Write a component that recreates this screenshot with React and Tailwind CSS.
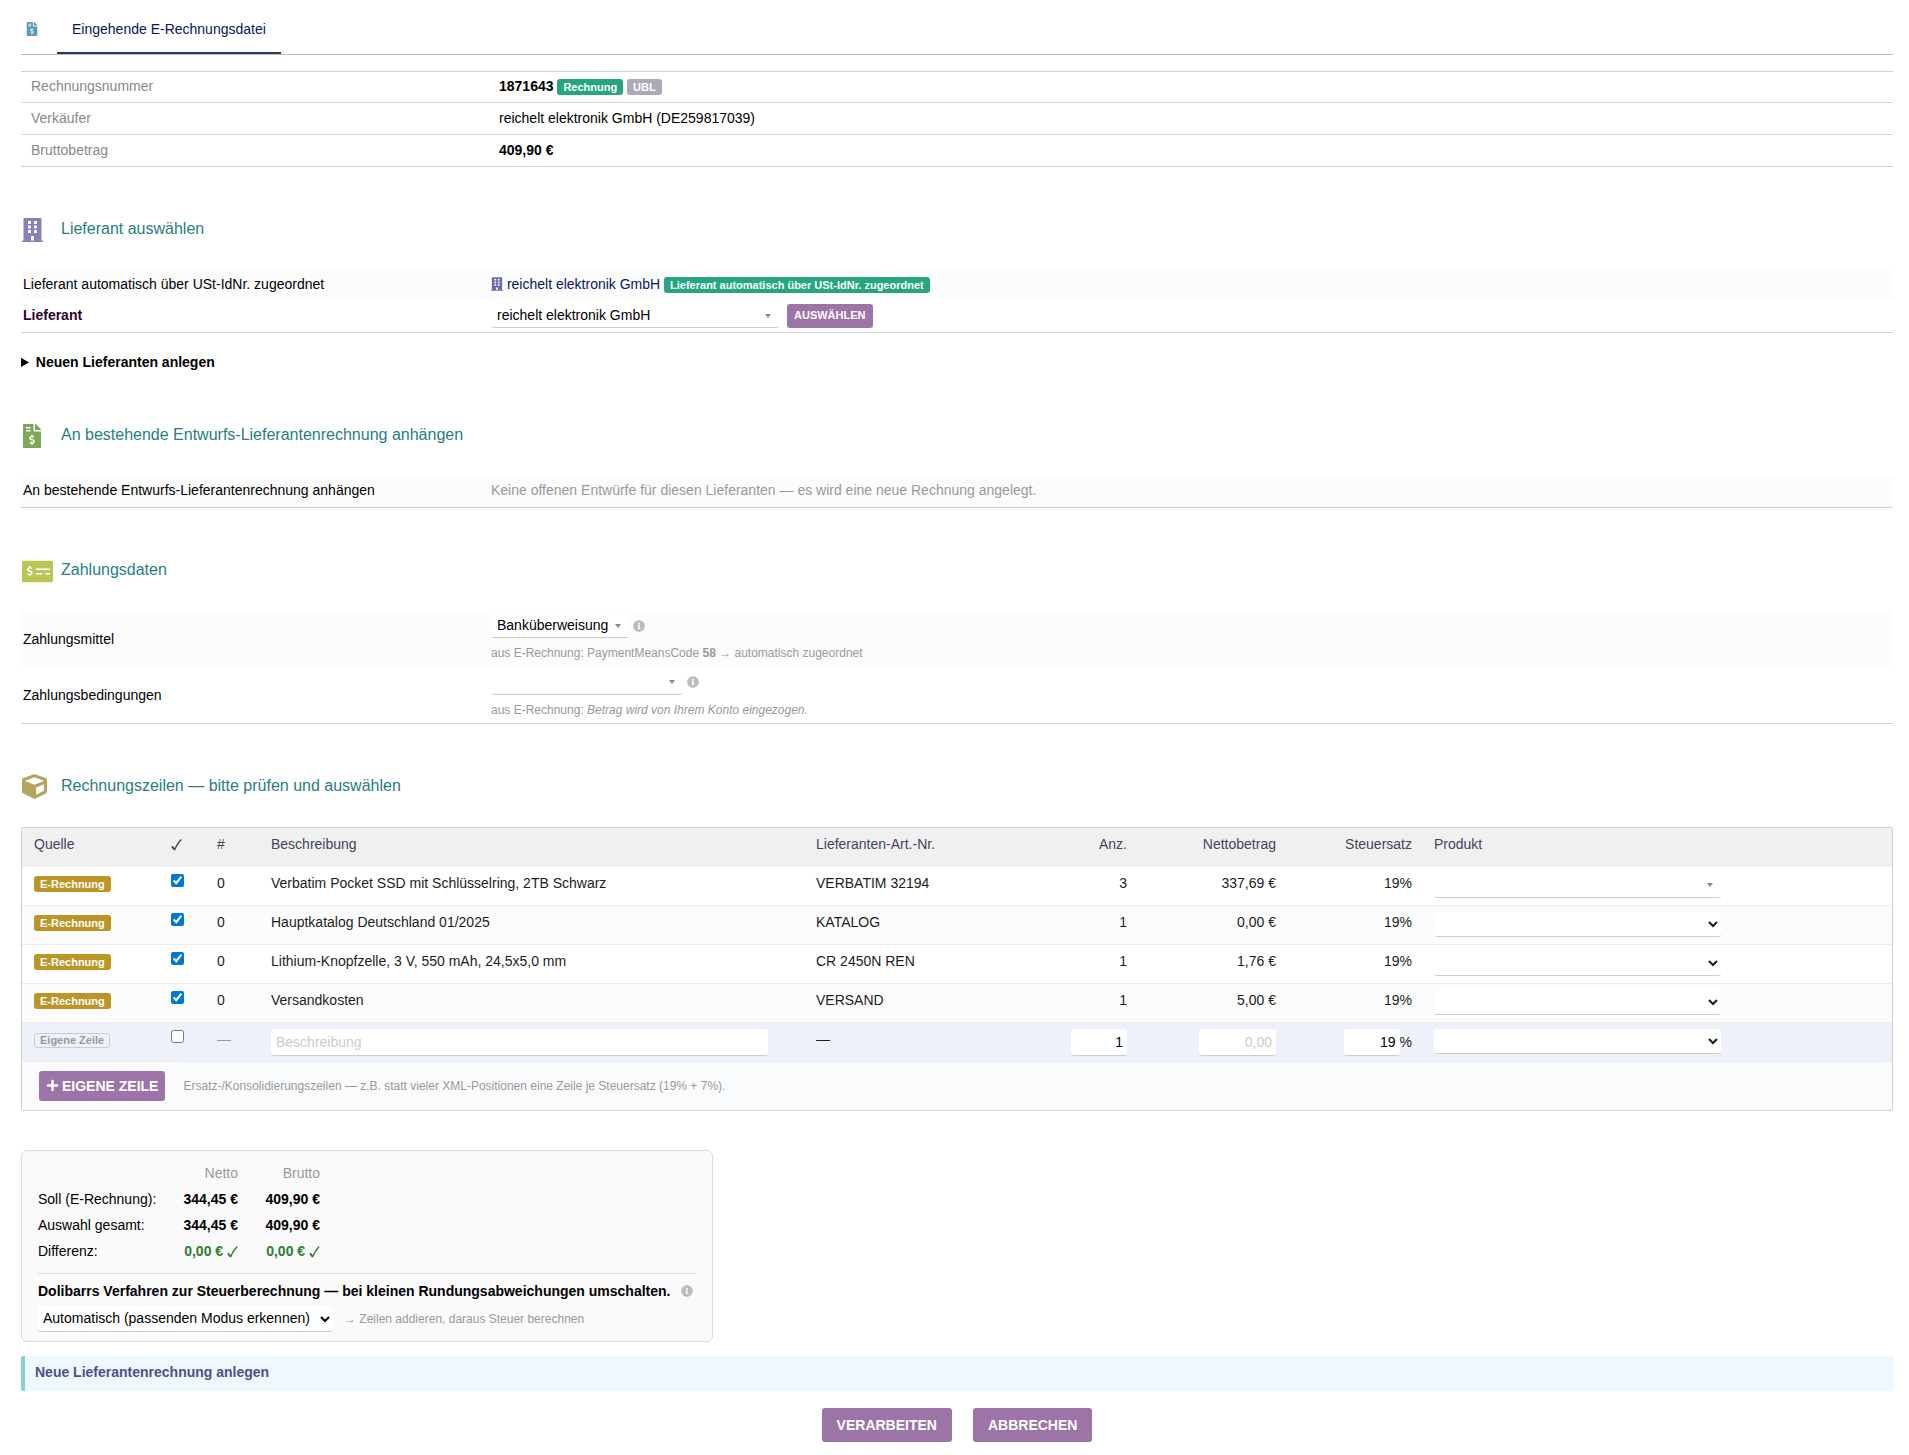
import React, { useState } from 'react';
import {
  FaBuilding,
  FaCube,
  FaFileInvoiceDollar,
  FaInfoCircle,
  FaMoneyCheckAlt,
  FaPlus,
} from 'react-icons/fa';

const initialLines = [
  { id: 1, pos: '0', text: 'Verbatim Pocket SSD mit Schlüsselring, 2TB Schwarz', ref: 'VERBATIM 32194', qty: '3', net: '337,69 €', vat: '19%' },
  { id: 2, pos: '0', text: 'Hauptkatalog Deutschland 01/2025', ref: 'KATALOG', qty: '1', net: '0,00 €', vat: '19%' },
  { id: 3, pos: '0', text: 'Lithium-Knopfzelle, 3 V, 550 mAh, 24,5x5,0 mm', ref: 'CR 2450N REN', qty: '1', net: '1,76 €', vat: '19%' },
  { id: 4, pos: '0', text: 'Versandkosten', ref: 'VERSAND', qty: '1', net: '5,00 €', vat: '19%' },
];

const totals = [
  { label: 'Soll (E-Rechnung):', net: '344,45 €', gross: '409,90 €' },
  { label: 'Auswahl gesamt:', net: '344,45 €', gross: '409,90 €' },
  { label: 'Differenz:', net: '0,00 €', gross: '0,00 €', ok: true },
];

const Badge = ({ color, children }) => (
  <span className={`inline-block rounded-[3px] px-1.5 text-[11px] leading-4 font-bold whitespace-nowrap ${color}`}>
    {children}
  </span>
);

const CheckMark = () => (
  <svg className="inline h-3 w-[11px]" viewBox="0 0 11 12" fill="none" stroke="currentColor" role="img" aria-label="OK">
    <path d="M1 7.4L3.6 10.6" strokeWidth="2" />
    <path d="M3.4 11.2C5 7.4 7.2 3.6 10.2 0.6" strokeWidth="1.4" />
  </svg>
);

const SectionTitle = ({ icon, children }) => (
  <h2 className="mt-[51px] mb-7 flex h-6 items-center text-base text-[#25807f]">
    <span className="w-10 shrink-0 pl-px">{icon}</span>
    <span className="pb-0.5">{children}</span>
  </h2>
);

// Select with the small grey triangle instead of the browser arrow
const ComboSelect = ({ label, options, className }) => (
  <span className="inline-grid items-center">
    <select
      aria-label={label}
      className={`col-start-1 row-start-1 h-[25px] appearance-none rounded-[3px] border-b border-[#ccc] bg-white pl-1.5 ${className}`}
    >
      {options.map((o) => (
        <option key={o}>{o}</option>
      ))}
    </select>
    <svg className="pointer-events-none col-start-1 row-start-1 mr-2 h-1 w-[6px] justify-self-end" viewBox="0 0 6 4">
      <path d="M0 0h6L3 4z" fill="#888" />
    </svg>
  </span>
);

const Info = ({ text }) => (
  <button type="button" title={text} aria-label={text} className="text-xs text-[#bbb]">
    <FaInfoCircle />
  </button>
);

const App = () => {
  const [checked, setChecked] = useState([1, 2, 3, 4]);

  const toggle = (id) => {
    setChecked(checked.includes(id) ? checked.filter((c) => c !== id) : [...checked, id]);
  };

  return (
    <div className="bg-white pr-4 pb-3 pl-[21px] font-['Liberation_Sans',Arial,sans-serif] text-sm text-black">
      {/* Tabs */}
      <nav className="flex h-[55px] border-b border-[#bbb]">
        <span className="flex w-9 items-center pt-1 pl-1 text-sm text-[#5b9bb0]">
          <FaFileInvoiceDollar />
        </span>
        <a href="#datei" className="flex items-center border-b-2 border-[#263c5c] px-[15px] pt-1.5 text-[#0a1464]">
          Eingehende E-Rechnungsdatei
        </a>
      </nav>

      {/* Invoice header */}
      <table className="mt-4 w-full table-fixed border-t border-[#d0d0d0]">
        <tbody>
          <tr className="h-[31px] border-b border-[#d8d8d8]">
            <th scope="row" className="w-1/4 px-[10px] pb-0.5 text-left font-normal text-[#888]">Rechnungsnummer</th>
            <td className="px-[10px] pb-0.5">
              <b>1871643</b> <Badge color="bg-[#25a580] text-white">Rechnung</Badge>{' '}
              <Badge color="bg-[#aaaabb] text-white">UBL</Badge>
            </td>
          </tr>
          <tr className="h-8 border-b border-[#d8d8d8]">
            <th scope="row" className="px-[10px] pb-0.5 text-left font-normal text-[#888]">Verkäufer</th>
            <td className="px-[10px] pb-0.5">reichelt elektronik GmbH (DE259817039)</td>
          </tr>
          <tr className="h-8 border-b border-[#d0d0d0]">
            <th scope="row" className="px-[10px] pb-0.5 text-left font-normal text-[#888]">Bruttobetrag</th>
            <td className="px-[10px] pb-0.5 font-bold">409,90 €</td>
          </tr>
        </tbody>
      </table>

      {/* Supplier */}
      <SectionTitle icon={<FaBuilding className="h-6 w-[21px] text-[#8681b8]" />}>Lieferant auswählen</SectionTitle>
      <table className="w-full table-fixed">
        <tbody>
          <tr className="h-[30px] bg-[#fcfcfc]">
            <th scope="row" className="w-1/4 px-0.5 pb-0.5 text-left font-normal">
              Lieferant automatisch über USt-IdNr. zugeordnet
            </th>
            <td className="px-0.5 pb-0.5">
              <a href="#lieferant" className="text-[#0a1464]">
                <FaBuilding className="mb-0.5 inline h-[14px] w-3 text-[#6c6aa8]" /> reichelt elektronik GmbH
              </a>{' '}
              <Badge color="bg-[#25a580] text-white">Lieferant automatisch über USt-IdNr. zugeordnet</Badge>
            </td>
          </tr>
          <tr className="h-8 border-b border-[#d0d0d0]">
            <th scope="row" className="px-0.5 pb-0.5 text-left font-bold text-[#300030]">Lieferant</th>
            <td className="px-0.5">
              <div className="flex items-center gap-2">
                <ComboSelect label="Lieferant" options={['reichelt elektronik GmbH']} className="w-72" />
                <button type="button" className="h-6 rounded-[3px] bg-[#9c74a8] px-[7px] text-[11px] font-bold text-white">
                  AUSWÄHLEN
                </button>
              </div>
            </td>
          </tr>
        </tbody>
      </table>

      <details className="mt-[18px] leading-[22px]">
        <summary className="cursor-pointer font-bold">Neuen Lieferanten anlegen</summary>
      </details>

      {/* Draft invoice */}
      <SectionTitle icon={<FaFileInvoiceDollar className="-ml-0.5 size-6 text-[#7fa65a]" />}>
        An bestehende Entwurfs-Lieferantenrechnung anhängen
      </SectionTitle>
      <table className="w-full table-fixed">
        <tbody>
          <tr className="h-8 border-b border-[#d0d0d0] bg-[#fcfcfc]">
            <th scope="row" className="w-1/4 px-0.5 pb-0.5 text-left font-normal">
              An bestehende Entwurfs-Lieferantenrechnung anhängen
            </th>
            <td className="px-0.5 pb-0.5 text-[#999]">
              Keine offenen Entwürfe für diesen Lieferanten — es wird eine neue Rechnung angelegt.
            </td>
          </tr>
        </tbody>
      </table>

      {/* Payment */}
      <SectionTitle icon={<FaMoneyCheckAlt className="h-[25px] w-[31px] text-[#bbc755]" />}>Zahlungsdaten</SectionTitle>
      <table className="w-full table-fixed">
        <tbody>
          <tr className="h-14 bg-[#fcfcfc]">
            <th scope="row" className="w-1/4 px-0.5 text-left font-normal">Zahlungsmittel</th>
            <td className="px-0.5 pb-1">
              <div className="flex items-center gap-1">
                <ComboSelect label="Zahlungsmittel" options={['Banküberweisung']} className="w-[138px]" />
                <Info text="Zahlungsmittel" />
              </div>
              <div className="mt-[7px] text-xs text-[#999]">
                aus E-Rechnung: PaymentMeansCode <b>58</b> → automatisch zugeordnet
              </div>
            </td>
          </tr>
          <tr className="h-14 border-b border-[#d0d0d0]">
            <th scope="row" className="px-0.5 text-left font-normal">Zahlungsbedingungen</th>
            <td className="px-0.5 pb-0.5">
              <div className="flex items-center gap-1">
                <ComboSelect label="Zahlungsbedingungen" options={['']} className="w-48" />
                <Info text="Zahlungsbedingungen" />
              </div>
              <div className="mt-[7px] text-xs text-[#999]">
                aus E-Rechnung: <i>Betrag wird von Ihrem Konto eingezogen.</i>
              </div>
            </td>
          </tr>
        </tbody>
      </table>

      {/* Invoice lines */}
      <SectionTitle icon={<FaCube className="size-[25px] text-[#b3a55c]" />}>
        Rechnungszeilen — bitte prüfen und auswählen
      </SectionTitle>
      <div className="rounded-[2px] border border-[#d0d0d0]">
        <table className="w-full table-fixed border-separate border-spacing-0 text-[#1c1c1c] [&_td]:border-b [&_td]:border-[#ececec] [&_td]:pt-[6px] [&_td]:pr-[10px] [&_td]:pl-3 [&_td]:align-top [&_th]:pr-[10px] [&_th]:pb-[7px] [&_th]:pl-3 [&_th]:font-normal">
          <thead>
            <tr className="h-[39px] bg-[#f0f0f0] text-left text-[#44445a]">
              <th className="w-[137px]">Quelle</th>
              <th className="w-[46px]"><CheckMark /></th>
              <th className="w-[54px]">#</th>
              <th>Beschreibung</th>
              <th className="w-[200px]">Lieferanten-Art.-Nr.</th>
              <th className="w-[133px] text-right">Anz.</th>
              <th className="w-[149px] text-right">Nettobetrag</th>
              <th className="w-[136px] text-right">Steuersatz</th>
              <th className="w-[470px]">Produkt</th>
            </tr>
          </thead>
          <tbody>
            {initialLines.map((line) => (
              <tr key={line.id} className="h-[39px] even:bg-[#fcfcfc]">
                <td><Badge color="bg-[#bc9526] text-white">E-Rechnung</Badge></td>
                <td>
                  <input
                    type="checkbox"
                    aria-label={line.text}
                    checked={checked.includes(line.id)}
                    onChange={() => toggle(line.id)}
                    className="mt-px block size-[13px] accent-[#0078d7]"
                  />
                </td>
                <td>{line.pos}</td>
                <td>{line.text}</td>
                <td>{line.ref}</td>
                <td className="text-right">{line.qty}</td>
                <td className="text-right">{line.net}</td>
                <td className="text-right">{line.vat}</td>
                <td>
                  {line.id === 1 ? (
                    <ComboSelect label="Produkt" options={['']} className="w-[287px]" />
                  ) : (
                    <select aria-label="Produkt" className="block h-[25px] w-[287px] rounded-[3px] border-b border-[#ccc] bg-white pr-0.5">
                      <option></option>
                    </select>
                  )}
                </td>
              </tr>
            ))}
            <tr className="h-[39px] bg-[#eef1f9]">
              <td>
                <span className="inline-block rounded-[3px] border border-[#ccc] px-[5px] text-[11px] leading-[13px] font-bold text-[#999]">
                  Eigene Zeile
                </span>
              </td>
              <td>
                <input
                  type="checkbox"
                  aria-label="Eigene Zeile"
                  checked={checked.includes('own')}
                  onChange={() => toggle('own')}
                  className="mt-px block size-[13px] accent-[#0078d7]"
                />
              </td>
              <td className="text-[#999]">—</td>
              <td>
                <input aria-label="Beschreibung" placeholder="Beschreibung" className="block h-[27px] w-[95%] rounded-[3px] border-b border-[#ccc] bg-white px-[5px] placeholder:text-[#ccc]" />
              </td>
              <td>—</td>
              <td>
                <input aria-label="Anzahl" defaultValue="1" className="ml-auto block h-[27px] w-14 rounded-[3px] border-b border-[#ccc] bg-white px-1 text-right text-black" />
              </td>
              <td>
                <input aria-label="Nettobetrag" placeholder="0,00" className="ml-auto block h-[27px] w-[77px] rounded-[3px] border-b border-[#ccc] bg-white px-1 text-right placeholder:text-[#ccc]" />
              </td>
              <td>
                <div className="flex items-center justify-end">
                  <input aria-label="Steuersatz" defaultValue="19" className="h-[27px] w-14 rounded-[3px] border-b border-[#ccc] bg-white px-1 text-right text-black" />
                  %
                </div>
              </td>
              <td>
                <select aria-label="Produkt" className="block h-[25px] w-[287px] rounded-[3px] border-b border-[#ccc] bg-white pr-0.5">
                  <option></option>
                </select>
              </td>
            </tr>
          </tbody>
        </table>
        <div className="flex h-12 items-center gap-[18px] bg-[#fafbfd] pl-[17px]">
          <button type="button" className="flex h-[30px] items-center gap-[3px] rounded-[3px] bg-[#9c74a8] px-[7px] font-bold text-white">
            <FaPlus className="size-[13px]" /> EIGENE ZEILE
          </button>
          <span className="text-xs text-[#999]">
            Ersatz-/Konsolidierungszeilen — z.B. statt vieler XML-Positionen eine Zeile je Steuersatz (19% + 7%).
          </span>
        </div>
      </div>

      {/* Totals */}
      <section className="mt-[39px] w-fit rounded-md border border-[#ddd] bg-[#fafafa] px-4 py-[9px]">
        <table className="text-right">
          <thead>
            <tr className="h-[26px] text-[#999]">
              <td className="w-[119px]"></td>
              <th className="w-[81px] font-normal">Netto</th>
              <th className="w-[82px] font-normal">Brutto</th>
            </tr>
          </thead>
          <tbody>
            {totals.map((row) => (
              <tr key={row.label} className="h-[26px]">
                <th scope="row" className="text-left font-normal whitespace-nowrap">{row.label}</th>
                <td className={row.ok ? 'font-bold text-[#2e7d32]' : 'font-bold'}>
                  {row.net} {row.ok && <CheckMark />}
                </td>
                <td className={row.ok ? 'font-bold text-[#2e7d32]' : 'font-bold'}>
                  {row.gross} {row.ok && <CheckMark />}
                </td>
              </tr>
            ))}
          </tbody>
        </table>
        <div className="mt-[9px] border-t border-[#ddd] pt-[7px]">
          <div className="flex items-center gap-[11px] pr-[3px]">
            <label htmlFor="mode" className="font-bold">
              Dolibarrs Verfahren zur Steuerberechnung — bei kleinen Rundungsabweichungen umschalten.
            </label>
            <Info text="Steuerberechnung" />
          </div>
          <div className="mt-[5px] flex items-center gap-[11px]">
            <select id="mode" className="h-[26px] w-[295px] rounded-[3px] border-b border-[#ccc] bg-white pr-0.5 pl-px">
              <option>Automatisch (passenden Modus erkennen)</option>
            </select>
            <span className="text-xs text-[#999]">→ Zeilen addieren, daraus Steuer berechnen</span>
          </div>
        </div>
      </section>

      <div className="mt-[14px] flex h-[35px] items-center rounded-l-[2px] border-l-4 border-[#87d2d2] bg-[#eff7ff] px-[10px] pb-0.5 font-bold text-[#505087]">
        Neue Lieferantenrechnung anlegen
      </div>

      <div className="mt-[17px] flex justify-center gap-[21px]">
        <button type="submit" className="h-[34px] rounded-[3px] bg-[#9c74a8] px-[15px] font-bold text-white">VERARBEITEN</button>
        <button type="button" className="h-[34px] rounded-[3px] bg-[#9c74a8] px-[15px] font-bold text-white">ABBRECHEN</button>
      </div>
    </div>
  );
};

export default App;
